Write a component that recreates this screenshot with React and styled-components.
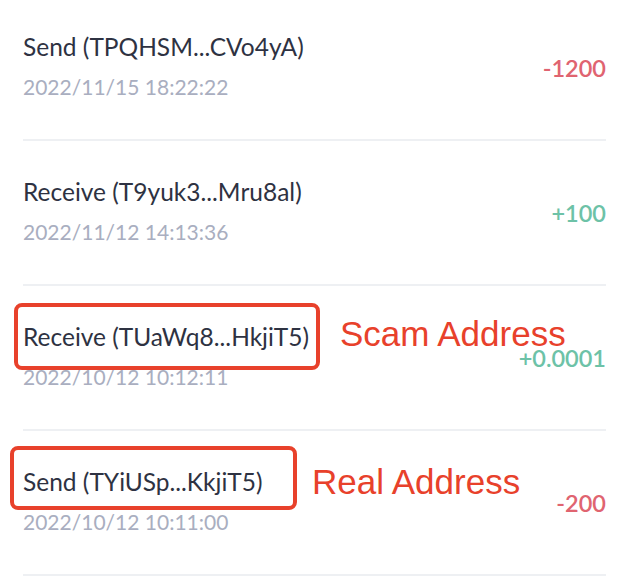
import React from 'react'
import styled, { createGlobalStyle } from 'styled-components'

const rows = [
    { id: 1, kind: 'Send', address: 'TPQHSM...CVo4yA', date: '2022/11/15 18:22:22', amount: '-1200' },
    { id: 2, kind: 'Receive', address: 'T9yuk3...Mru8al', date: '2022/11/12 14:13:36', amount: '+100' },
    {
        id: 3, kind: 'Receive', address: 'TUaWq8...HkjiT5', date: '2022/10/12 10:12:11', amount: '+0.0001',
        note: { label: 'Scam Address', box: [-9, 17, 306, 67], text: [317, 28] },
    },
    {
        id: 4, kind: 'Send', address: 'TYiUSp...KkjiT5', date: '2022/10/12 10:11:00', amount: '-200',
        note: { label: 'Real Address', box: [-13, 15, 287, 64], text: [289, 31] },
    },
]

export default () => (
    <Page>
        <GlobalStyle />
        <List>
            {rows.map(({ id, kind, address, date, amount, note }) => (
                <Row key={id}>
                    <Info>
                        <Title>{kind} ({address})</Title>
                        <Date>{date}</Date>
                    </Info>
                    <Amount negative={amount.startsWith('-')}>{amount}</Amount>
                    {note && (
                        <>
                            <Callout
                                style={{
                                    left: note.box[0],
                                    top: note.box[1],
                                    width: note.box[2],
                                    height: note.box[3],
                                }}
                            />
                            <CalloutLabel style={{ left: note.text[0], top: note.text[1] }}>
                                {note.label}
                            </CalloutLabel>
                        </>
                    )}
                </Row>
            ))}
        </List>
    </Page>
)

const GlobalStyle = createGlobalStyle`
    html, body {
        margin: 0;
        background: #ffffff;
    }
    body {
        font-family: Lato, "Noto Sans", sans-serif;
    }
`

const Page = styled.div`
    width: 630px;
    height: 584px;
    overflow: hidden;
    padding: 0 24px 0 23px;
    box-sizing: border-box;
`

const List = styled.ul`
    list-style: none;
    margin: -4px 0 0;
    padding: 0;
`

const Row = styled.li`
    position: relative;
    display: flex;
    justify-content: space-between;
    align-items: center;
    height: 145px;
    box-sizing: border-box;
    padding: 36px 0 39px;
    border-bottom: 2px solid #eef0f3;
`

const Info = styled.div`
    display: flex;
    flex-direction: column;
    gap: 13px;
`

const Title = styled.span`
    font-size: 24.5px;
    line-height: 29px;
    color: #2e3242;
`

const Date = styled.span`
    font-size: 21px;
    line-height: 26px;
    color: #a9aec0;
`

const Amount = styled.span`
    margin-top: 4px;
    font-size: 23.5px;
    line-height: 28px;
    font-weight: 600;
    color: ${props => (props.negative ? '#e06470' : '#6dc2a7')};
`

const Callout = styled.div`
    position: absolute;
    box-sizing: border-box;
    border: 4px solid #e8412b;
    border-radius: 8px;
`

const CalloutLabel = styled.span`
    position: absolute;
    font-family: "Liberation Sans", Arial, sans-serif;
    font-size: 35px;
    line-height: 40px;
    color: #e8412b;
    white-space: nowrap;
`
